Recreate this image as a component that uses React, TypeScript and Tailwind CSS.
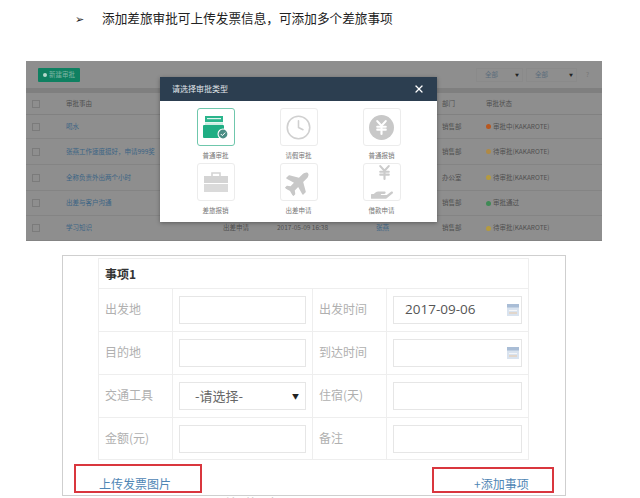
import React from 'react';
import { Clock, JapaneseYen, X } from 'lucide-react';
import { FaPlane, FaHandHolding } from 'react-icons/fa';

// Only the last row's middle columns stick out below the picker, the rest sit behind it
const rows = [
  { title: '喝水', dept: '销售部', dot: 'bg-[#b8571f]', status: '审批中(KAKAROTE)', h: 'h-[24px]' },
  { title: '张燕工作速度挺好，申请999奖', dept: '销售部', dot: 'bg-[#b08a45]', status: '待审批(KAKAROTE)', h: 'h-[26px]' },
  { title: '全称负责外出两个小时', dept: '办公室', dot: 'bg-[#b59a3e]', status: '待审批(KAKAROTE)', h: 'h-[26px]' },
  { title: '出差与客户沟通', dept: '销售部', dot: 'bg-[#3f8a55]', status: '审批通过', h: 'h-[25px]' },
  { title: '学习知识', type: '出差申请', date: '2017-05-09 16:38', user: '张燕', dept: '销售部', dot: 'bg-[#b59a3e]', status: '待审批(KAKAROTE)', h: 'h-[25px]' },
];

const CardIcon = () => (
  <svg width="26" height="26" viewBox="0 0 26 26">
    <rect x="2" y="2" width="18" height="6" fill="#2bb58c" />
    <rect x="2" y="8.5" width="18" height="5" fill="#cdeee3" />
    <rect x="4" y="4" width="14" height="1.2" fill="#dff5ee" />
    <rect x="0" y="11" width="21" height="13" rx="1" fill="#1fae84" />
    <circle cx="20" cy="20" r="5.5" fill="#fff" />
    <circle cx="20" cy="20" r="4.4" fill="#4b8d85" />
    <path d="M17.8 20l1.6 1.6 2.8-3" stroke="#fff" strokeWidth="1" fill="none" />
  </svg>
);

const CaseIcon = () => (
  <svg width="26" height="24" viewBox="0 0 26 24">
    <path d="M9 6V3h8v3" stroke="#d4d4d4" strokeWidth="1.6" fill="none" />
    <rect x="1" y="6" width="24" height="7" fill="#d4d4d4" />
    <rect x="1" y="14" width="24" height="8" fill="#dadada" />
  </svg>
);

const YenCoin = () => (
  <span className="flex w-[25px] h-[25px] rounded-full bg-[#c8c8c8] items-center justify-center">
    <JapaneseYen size={17} strokeWidth={3} className="text-white" />
  </span>
);

const HandYen = () => (
  <span className="flex flex-col items-center text-[#cbcbcb]">
    <JapaneseYen size={17} strokeWidth={3} className="-mb-[3px] ml-[5px]" />
    <FaHandHolding size={22} />
  </span>
);

const types = [
  { label: '普通审批', icon: <CardIcon />, active: true },
  { label: '请假审批', icon: <Clock size={27} strokeWidth={1.4} className="text-[#d0d0d0]" /> },
  { label: '普通报销', icon: <YenCoin /> },
  { label: '差旅报销', icon: <CaseIcon /> },
  { label: '出差申请', icon: <FaPlane size={27} className="-rotate-45 text-[#c8c8c8]" /> },
  { label: '借款申请', icon: <HandYen /> },
];

const CalendarIcon = () => (
  <svg width="12" height="12" viewBox="0 0 12 12">
    <rect width="12" height="12" fill="#d9e3ef" />
    <rect width="12" height="3.5" fill="#a9bdd6" />
    <rect x="2" y="6" width="8" height="1" fill="#f4f6f9" />
    <rect x="2" y="8.5" width="8" height="1" fill="#e9c9a8" />
  </svg>
);

const Label = ({ text }: { text: string }) => (
  <td className="border border-[#eeeeee] pl-[6px] pb-[2px] text-[12px] text-[#b0b0b0]">{text}</td>
);

const Cell = ({ children }: { children?: React.ReactNode }) => (
  <td className="border border-[#eeeeee] px-[6px]">
    <div className="h-[28px] border border-[#e6e6e6] flex items-center justify-between text-[13.5px] text-[#555]">
      {children}
    </div>
  </td>
);

export default function App() {
  return (
    <div className="w-[640px] h-[498px] overflow-hidden bg-white font-['Noto_Sans_CJK_SC','Noto_Sans',sans-serif]">
      {/* Bullet line */}
      <div className="h-[61px] pt-[9px] pl-[75px] flex items-start text-[12.65px] leading-[18px] text-[#222]">
        <span className="w-[27px] text-[11px]">➢</span>
        <span>添加差旅审批可上传发票信息，可添加多个差旅事项</span>
      </div>

      {/* Dimmed approvals list with the type picker open */}
      <section className="relative ml-[26px] w-[576px] h-[180px] bg-[#8e8e8e] text-[6.5px] text-[#4f4f4f]">
        <div className="h-[27px] flex items-center justify-between pl-[12px] pr-[7px]">
          <div className="w-[42px] h-[14px] bg-[#0f8061] rounded-[1px] flex items-center justify-center gap-[2px] text-[#7fb5a5]">
            <span className="w-[4px] h-[4px] rounded-full bg-[#b5d8cd]" />
            新建审批
          </div>
          <div className="flex items-center gap-[3px] text-[#5a6d7c]">
            <div className="w-[47px] h-[14px] border border-[#8a8a8a] flex items-center justify-between pl-[8px] pr-[3px]">
              全部<span className="text-[4px] text-[#222]">▼</span>
            </div>
            <div className="w-[51px] h-[14px] border border-[#8a8a8a] flex items-center justify-between pl-[8px] pr-[3px]">
              全部<span className="text-[4px] text-[#222]">▼</span>
            </div>
            <div className="w-[15px] h-[14px] flex items-center justify-center text-[#777]">?</div>
          </div>
        </div>
        <div className="h-[5px] bg-[#7f7f7f]" />

        <div className="grid grid-cols-[40px_157px_54px_99px_66px_44px_1fr] h-[22px] items-center border-b border-[#818181]">
          <span className="ml-[6px] w-[8px] h-[8px] border border-[#7b7b7b]" />
          <span>审批事由</span>
          <span />
          <span />
          <span />
          <span>部门</span>
          <span>审批状态</span>
        </div>
        {rows.map((row) => (
          <div key={row.title} className={`grid grid-cols-[40px_157px_54px_99px_66px_44px_1fr] items-center border-b border-[#848484] ${row.h}`}>
            <span className="ml-[6px] w-[8px] h-[8px] border border-[#7b7b7b]" />
            <span className="text-[#3b6485]">{row.title}</span>
            <span>{row.type}</span>
            <span>{row.date}</span>
            <span className="text-[#3b6485]">{row.user}</span>
            <span>{row.dept}</span>
            <span className="flex items-center gap-[2px]">
              <span className={`w-[5px] h-[5px] rounded-full ${row.dot}`} />
              {row.status}
            </span>
          </div>
        ))}

        <div className="absolute left-[134px] top-[16px] w-[277px] h-[145px] bg-white shadow-[0_1px_4px_rgba(0,0,0,0.35)]">
          <div className="h-[24px] bg-[#2c3e50] flex items-center justify-between pl-[12px] pr-[12px] text-[8px] text-[#e2e6ea]">
            请选择审批类型
            <X size={12} strokeWidth={2.5} className="text-white" />
          </div>
          <div className="grid grid-cols-3 px-[14px] pt-[7px]">
            {types.map((t) => (
              <div key={t.label} className="h-[55px] flex flex-col items-center">
                <div className={`w-[38px] h-[38px] rounded-[3px] flex items-center justify-center border ${t.active ? 'border-[#6fc7ac]' : 'border-[#ececec]'}`}>
                  {t.icon}
                </div>
                <span className="mt-[4px] text-[6.5px] leading-[10px] text-[#777]">{t.label}</span>
              </div>
            ))}
          </div>
        </div>
      </section>

      {/* Travel item form */}
      <section className="mt-[14px] ml-[62px] w-[504px] h-[241px] border border-[#cfcfcf] pt-[2px] pl-[35px]">
        <table className="w-[430px] h-[201px] table-fixed border-collapse">
          <colgroup>
            <col className="w-[74px]" />
            <col className="w-[140px]" />
            <col className="w-[74px]" />
            <col className="w-[142px]" />
          </colgroup>
          <tbody>
            <tr className="h-[30px]">
              <td colSpan={4} className="border border-[#eeeeee] pl-[6px] text-[12px] font-bold text-[#333]">事项1</td>
            </tr>
            <tr className="h-[43px]">
              <Label text="出发地" />
              <Cell />
              <Label text="出发时间" />
              <Cell>
                <span className="pl-[11px] pb-[1px] font-['Open_Sans',sans-serif]">2017-09-06</span>
                <span className="pr-[2px]"><CalendarIcon /></span>
              </Cell>
            </tr>
            <tr className="h-[43px]">
              <Label text="目的地" />
              <Cell />
              <Label text="到达时间" />
              <Cell>
                <span />
                <span className="pr-[2px]"><CalendarIcon /></span>
              </Cell>
            </tr>
            <tr className="h-[43px]">
              <Label text="交通工具" />
              <Cell>
                <span className="pl-[15px] text-[13px] text-[#666]">-请选择-</span>
                <span className="pr-[6px] text-[7px] text-[#222]">▼</span>
              </Cell>
              <Label text="住宿(天)" />
              <Cell />
            </tr>
            <tr className="h-[42px]">
              <Label text="金额(元)" />
              <Cell />
              <Label text="备注" />
              <Cell />
            </tr>
          </tbody>
        </table>
        <div className="-ml-[24px] mt-[4px] flex items-end justify-between w-[480px] text-[12px] text-[#4f86b5]">
          <div className="w-[128px] h-[29px] border-2 border-[#d9363e] pl-[23px] pt-[9px] leading-[18px]">上传发票图片</div>
          <div className="w-[122px] h-[26px] border-2 border-[#d9363e] pl-[40px] pt-[6px] leading-[18px]">+添加事项</div>
        </div>
      </section>
      <p className="mt-[-2px] ml-[224px] text-[13px] leading-[18px] tracking-[8px] text-[#c9c9c9]">差旅事项</p>
    </div>
  );
}
